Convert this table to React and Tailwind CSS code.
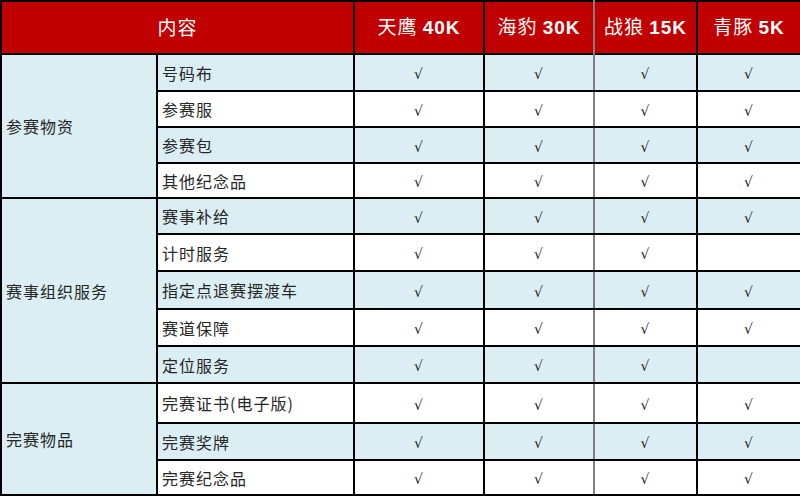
import React from "react";

const groups = [
  {
    name: "参赛物资",
    rows: [
      { label: "号码布", h: 37, five: true },
      { label: "参赛服", h: 36, five: true },
      { label: "参赛包", h: 36, five: true },
      { label: "其他纪念品", h: 35, five: true },
    ],
  },
  {
    name: "赛事组织服务",
    rows: [
      { label: "赛事补给", h: 36, five: true },
      { label: "计时服务", h: 37, five: false },
      { label: "指定点退赛摆渡车", h: 38, five: true },
      { label: "赛道保障", h: 37, five: true },
      { label: "定位服务", h: 37, five: false },
    ],
  },
  {
    name: "完赛物品",
    rows: [
      { label: "完赛证书(电子版)", h: 40, five: true },
      { label: "完赛奖牌", h: 37, five: true },
      { label: "完赛纪念品", h: 35, five: true },
    ],
  },
];

const heads = [
  ["天鹰", "40K"],
  ["海豹", "30K"],
  ["战狼", "15K"],
  ["青豚", "5K"],
];

const cjk = { fontFamily: '"Noto Sans CJK SC", "Liberation Sans", sans-serif' };

function Check() {
  return <span className="text-[14px] text-[#222]" style={{ fontFamily: '"DejaVu Sans", sans-serif' }}>√</span>;
}

export default function App() {
  let idx = 0;
  return (
    <div className="w-[800px] h-[496px] bg-[#f0f0f0]" style={cjk}>
      <table className="table-fixed border-collapse w-[800px] border-2 border-black">
        <colgroup>
          <col className="w-[156px]" />
          <col className="w-[197px]" />
          <col className="w-[130px]" />
          <col className="w-[110px]" />
          <col className="w-[103px]" />
          <col className="w-[104px]" />
        </colgroup>
        <thead>
          <tr className="h-[53px] bg-[#c00000] text-white text-[19px] tracking-[1px]">
            <th colSpan={2} className="font-normal border-2 border-black border-b border-b-[#3a0000]">内容</th>
            {heads.map(([cn, k], i) => (
              <th
                key={cn}
                className={`font-normal border-2 border-black border-b border-b-[#3a0000] ${i === 1 ? "border-r-[#7f7f7f]" : ""} ${i === 2 ? "border-l-[#7f7f7f]" : ""}`}
              >
                {cn} <span className="font-bold" style={{ fontFamily: '"Liberation Sans", sans-serif' }}>{k}</span>
              </th>
            ))}
          </tr>
        </thead>
        <tbody className="text-[16px] tracking-[1px] text-[#262626]">
          {groups.map(g =>
            g.rows.map((r, j) => {
              const blue = idx++ % 2 === 0;
              const bg = blue ? "bg-[#daeef3]" : "bg-white";
              return (
                <tr key={r.label} style={{ height: r.h }} className={bg}>
                  {j === 0 && (
                    <td rowSpan={g.rows.length} className="bg-[#daeef3] border-2 border-black pl-[4px] align-middle">
                      {g.name}
                    </td>
                  )}
                  <td className="border-2 border-black pl-[4px]">{r.label}</td>
                  <td className="border-2 border-black text-center"><Check /></td>
                  <td className="border-2 border-black border-r-[#7f7f7f] text-center"><Check /></td>
                  <td className="border-2 border-black border-l-[#7f7f7f] text-center"><Check /></td>
                  <td className="border-2 border-black text-center">{r.five && <Check />}</td>
                </tr>
              );
            })
          )}
        </tbody>
      </table>
    </div>
  );
}
